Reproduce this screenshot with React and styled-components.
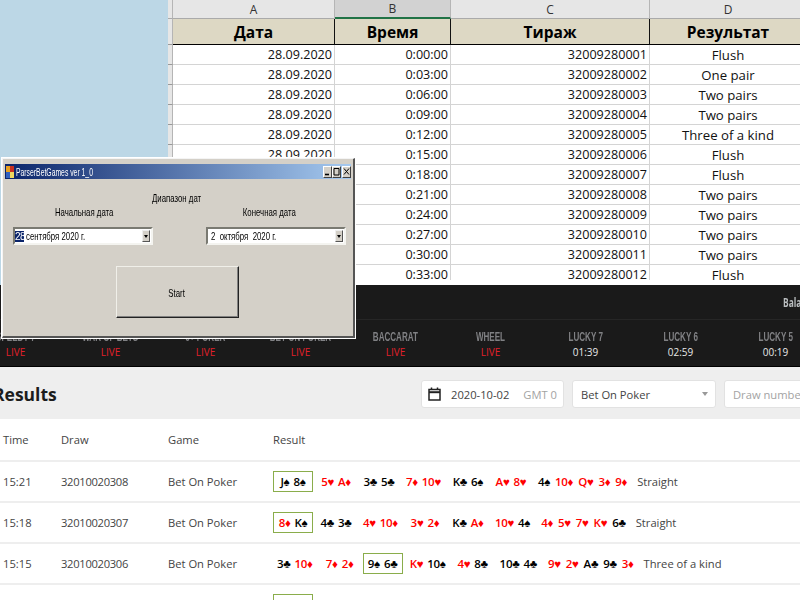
import React from "react";
import styled, { createGlobalStyle } from "styled-components";

const GlobalStyle = createGlobalStyle`
  html, body {
    margin: 0;
    padding: 0;
    width: 800px;
    height: 600px;
    overflow: hidden;
    background: #fff;
    font-family: "Open Sans", "Liberation Sans", sans-serif;
  }
`;

const Page = styled.div`
  position: relative;
  width: 800px;
  height: 600px;
  overflow: hidden;
`;

/* no condensed family is installed, so narrow text is squeezed */
const Squeezed = styled.span`
  display: inline-block;
  white-space: nowrap;
  transform: scaleX(${(p) => p.$x || 0.71});
  transform-origin: ${(p) => (p.$left ? "left center" : "center")};
`;

/* spreadsheet strip */
const Top = styled.div`
  display: flex;
  height: 285px;
  background: #fff;
`;

const Desktop = styled.div`
  flex: 0 0 168px;
  background: #bcd7e6;
`;

const Sheet = styled.div`
  flex: 1;
  height: 280px;
  overflow: hidden;
  display: grid;
  grid-template-columns: 5px 162px 116px 199px 157px;
  grid-auto-rows: 20px;
  grid-template-rows: 19px 26px;
  font-size: 12.6px;
  color: #111;
`;

const Corner = styled.div`
  background: #e6e6e6;
  border-right: 1px solid #b5b5b5;
  border-bottom: 1px solid #aaa;
  box-sizing: border-box;
`;

const ColLetter = styled.div`
  display: flex;
  align-items: center;
  justify-content: center;
  box-sizing: border-box;
  font-size: 12px;
  color: #333;
  background: ${(p) => (p.$active ? "#d2d2d2" : "#e6e6e6")};
  border-right: 1px solid #b5b5b5;
  border-bottom: ${(p) => (p.$active ? "2px solid #217346" : "1px solid #aaa")};
`;

const HeadCell = styled.div`
  display: flex;
  align-items: center;
  justify-content: center;
  box-sizing: border-box;
  padding-top: 1px;
  background: #ddd8c4;
  font-size: 15.5px;
  font-weight: 700;
  color: #000;
  border-right: 1px solid #111;
  border-bottom: 1px solid #000;
`;

const RowEdge = styled.div`
  background: #e6e6e6;
  box-sizing: border-box;
  border-right: 1px solid #b5b5b5;
  border-bottom: 1px solid #999;
`;

const Cell = styled.div`
  display: flex;
  align-items: center;
  justify-content: ${(p) => (p.$center ? "center" : "flex-end")};
  box-sizing: border-box;
  padding-right: ${(p) => (p.$center ? "0" : "2px")};
  font-size: ${(p) => (p.$center ? "13.2px" : "inherit")};
  border-right: 1px solid #d4d4d4;
  border-bottom: 1px solid #d4d4d4;
`;

/* dark game bar */
const GameBar = styled.div`
  height: 82px;
  background: #1a1a1a;
  border-bottom: 1px solid #000;
  box-sizing: border-box;
`;

const BarTop = styled.div`
  height: 35px;
  box-sizing: border-box;
  padding-left: 783px;
  display: flex;
  align-items: center;
  border-bottom: 1px solid #262626;
  overflow: hidden;
  font-size: 12px;
  font-weight: 700;
  color: #b9bdbf;
`;

const GameRow = styled.div`
  display: grid;
  grid-template-columns: repeat(9, 95px);
  margin-left: -32px;
  padding-top: 9px;
`;

const Game = styled.div`
  display: flex;
  flex-direction: column;
  align-items: center;
  gap: 1px;
`;

const GameName = styled.span`
  font-family: "Liberation Sans", sans-serif;
  font-size: 13px;
  line-height: 15px;
  font-weight: 700;
  color: #808184;
`;

const GameState = styled.span`
  font-size: 10px;
  line-height: 14px;
  color: ${(p) => (p.$live ? "#e0202a" : "#e8e8e8")};
`;

/* results */
const ResultsHead = styled.div`
  height: 52px;
  background: #eee;
  display: flex;
  align-items: center;
  padding-top: 2px;
  box-sizing: border-box;
`;

const Title = styled.h1`
  flex: 0 0 421px;
  margin: 0;
  text-indent: -7px;
  font-size: 17.5px;
  font-weight: 700;
  color: #1c1c1c;
`;

const Field = styled.div`
  flex: 0 0 ${(p) => p.$w}px;
  height: 28px;
  margin-right: 8px;
  box-sizing: border-box;
  background: #fff;
  border: 1px solid #e2e2e2;
  border-radius: 3px;
  display: flex;
  align-items: center;
  padding: 0 6px 0 ${(p) => p.$pad || 8}px;
  font-size: 11.2px;
  color: #444;
  white-space: nowrap;
`;

const DateText = styled.span`
  margin-left: 10px;
  flex: 1;
`;

const Muted = styled.span`
  color: #a3a3a3;
`;

const SelectText = styled.span`
  flex: 1;
`;

const Caret = styled.span`
  width: 0;
  height: 0;
  margin-right: 1px;
  border-left: 3.5px solid transparent;
  border-right: 3.5px solid transparent;
  border-top: 4px solid #999;
`;

const Row = styled.div`
  height: ${(p) => (p.$head ? "43px" : "41px")};
  box-sizing: border-box;
  display: grid;
  grid-template-columns: 58px 107px 105px 1fr;
  align-items: center;
  padding-left: 3px;
  background: #fff;
  border-bottom: 2px solid #eee;
  font-size: 11.2px;
  color: #444;
  white-space: nowrap;
`;

const DrawNo = styled.span`
  letter-spacing: -0.3px;
`;

const Cards = styled.div`
  display: flex;
  align-items: center;
`;

const Hand = styled.span`
  display: flex;
  justify-content: center;
  gap: ${(p) => (p.$board ? "5px" : "4px")};
  min-width: 40px;
  height: 21px;
  align-items: center;
  padding: 0 3px;
  margin-right: 3px;
  box-sizing: border-box;
  border: 1px solid ${(p) => (p.$win ? "#8aad4b" : "transparent")};
`;

const Card = styled.span`
  display: inline-flex;
  align-items: center;
  font-size: 11.5px;
  font-weight: 600;
  letter-spacing: -0.3px;
  color: ${(p) => (p.$red ? "#ff0000" : "#000")};
`;

const Combo = styled.span`
  margin-left: 3px;
`;

/* windows form floating over the collage */
const FormWindow = styled.div`
  position: absolute;
  left: 2px;
  top: 158px;
  width: 353px;
  height: 180px;
  box-sizing: border-box;
  padding: 5px 2px 2px 2px;
  background: #d4d0c8;
  border: 1px solid #f4f4f4;
  border-right: 2px solid #555;
  border-bottom: 2px solid #555;
  outline: 1px solid #fff;
  filter: blur(0.35px);
  font-family: "Liberation Sans", sans-serif;
  font-size: 11px;
  color: #000;
`;

const TitleBar = styled.div`
  height: 15px;
  display: flex;
  align-items: center;
  padding: 0 0 0 1px;
  background: linear-gradient(90deg, #0a246a, #a6caf0);
  color: #fff;
`;

const AppIcon = styled.svg`
  width: 8px;
  height: 12px;
  margin-right: 2px;
`;

const TitleText = styled.span`
  flex: 1;
  min-width: 0;
`;

const WinBtn = styled.span`
  width: 9px;
  height: 12px;
  margin-right: ${(p) => (p.$gap ? "1px" : "0")};
  box-sizing: border-box;
  background: #d4d0c8;
  border: 1px solid;
  border-color: #fff #404040 #404040 #fff;
  display: flex;
  align-items: center;
  justify-content: center;
`;

const FormBody = styled.div`
  display: flex;
  flex-direction: column;
  padding-top: 13px;
`;

const Caption = styled.div`
  text-align: center;
  line-height: 12px;
  margin-right: 2px;
`;

const PickerGrid = styled.div`
  display: grid;
  grid-template-columns: 140px 140px;
  column-gap: 53px;
  padding-left: 8px;
  margin-top: 2px;
`;

const PickerColumn = styled.div`
  display: flex;
  flex-direction: column;
`;

const PickerLabel = styled.div`
  text-align: center;
  line-height: 12px;
  margin-bottom: 9px;
  margin-right: ${(p) => p.$shift}px;
`;

const Picker = styled.div`
  height: 18px;
  box-sizing: border-box;
  display: flex;
  align-items: center;
  background: #fff;
  border: 2px solid;
  border-color: #7a7a72 #f4f4f0 #f4f4f0 #7a7a72;
  padding-right: 1px;
`;

const PickerText = styled.span`
  flex: 1;
  min-width: 0;
  display: flex;
  align-items: center;
  padding-left: ${(p) => p.$pad || 0}px;
`;

const Selected = styled.span`
  background: #0a246a;
  color: #fff;
  font-size: 10px;
  width: 9px;
  margin-right: 2px;
  overflow: hidden;
  letter-spacing: -0.6px;
`;

const PickerArrow = styled.span`
  flex: 0 0 8px;
  height: 12px;
  box-sizing: border-box;
  background: #d4d0c8;
  border: 1px solid;
  border-color: #eee #555 #555 #eee;
  display: flex;
  align-items: center;
  justify-content: center;

  &::after {
    content: "";
    border-left: 2px solid transparent;
    border-right: 2px solid transparent;
    border-top: 3px solid #000;
  }
`;

const StartButton = styled.div`
  align-self: center;
  width: 123px;
  height: 52px;
  margin-top: 21px;
  margin-left: -2px;
  padding-top: 2px;
  box-sizing: border-box;
  display: flex;
  align-items: center;
  justify-content: center;
  background: #d4d0c8;
  border: 1px solid;
  border-color: #f0efe9 #222 #222 #f0efe9;
  box-shadow: inset -1px -1px 0 #808080;
`;

const dates = ["0:00:00", "0:03:00", "0:06:00", "0:09:00", "0:12:00", "0:15:00", "0:18:00", "0:21:00", "0:24:00", "0:27:00", "0:30:00", "0:33:00"];
const outcomes = ["Flush", "One pair", "Two pairs", "Two pairs", "Three of a kind", "Flush", "Flush", "Two pairs", "Two pairs", "Two pairs", "Two pairs", "Flush"];

const games = [
  ["SPEEDY 7", "LIVE"],
  ["WAR OF BETS", "LIVE"],
  ["6+ POKER", "LIVE"],
  ["BET ON POKER", "LIVE"],
  ["BACCARAT", "LIVE"],
  ["WHEEL", "LIVE"],
  ["LUCKY 7", "01:39"],
  ["LUCKY 6", "02:59"],
  ["LUCKY 5", "00:19"],
];

const results = [
  {
    time: "15:21",
    draw: "32010020308",
    win: 0,
    hands: ["J♠ 8♠", "5♥ A♦", "3♣ 5♣", "7♦ 10♥", "K♣ 6♠", "A♥ 8♥", "4♠ 10♦ Q♥ 3♦ 9♦"],
    combo: "Straight",
  },
  {
    time: "15:18",
    draw: "32010020307",
    win: 0,
    hands: ["8♦ K♠", "4♣ 3♣", "4♥ 10♦", "3♥ 2♦", "K♣ A♦", "10♥ 4♠", "4♦ 5♥ 7♥ K♥ 6♣"],
    combo: "Straight",
  },
  {
    time: "15:15",
    draw: "32010020306",
    win: 2,
    hands: ["3♣ 10♦", "7♦ 2♦", "9♠ 6♣", "K♥ 10♠", "4♥ 8♣", "10♣ 4♣", "9♥ 2♥ A♣ 9♣ 3♦"],
    combo: "Three of a kind",
  },
];

const isRed = (c) => c.includes("♥") || c.includes("♦");

const App = () => {
  return (
    <Page>
      <GlobalStyle />
      <Top>
        <Desktop />
        <Sheet>
          <Corner />
          <ColLetter>A</ColLetter>
          <ColLetter $active>B</ColLetter>
          <ColLetter>C</ColLetter>
          <ColLetter>D</ColLetter>
          <RowEdge />
          <HeadCell>Дата</HeadCell>
          <HeadCell>Время</HeadCell>
          <HeadCell>Тираж</HeadCell>
          <HeadCell>Результат</HeadCell>
          {dates.map((t, i) => (
            <React.Fragment key={t}>
              <RowEdge />
              <Cell>28.09.2020</Cell>
              <Cell>{t}</Cell>
              <Cell>{32009280001 + i}</Cell>
              <Cell $center>{outcomes[i]}</Cell>
            </React.Fragment>
          ))}
        </Sheet>
      </Top>

      <GameBar>
        <BarTop>
          <Squeezed $x={0.7} $left>Balance</Squeezed>
        </BarTop>
        <GameRow>
          {games.map(([name, state]) => (
            <Game key={name}>
              <GameName>
                <Squeezed $x={0.62}>{name}</Squeezed>
              </GameName>
              <GameState $live={state === "LIVE"}>{state}</GameState>
            </Game>
          ))}
        </GameRow>
      </GameBar>

      <ResultsHead>
        <Title>Results</Title>
        <Field $w={143} $pad={6}>
          <svg width="13" height="14" viewBox="0 0 13 14" fill="none" stroke="#222" strokeWidth="1.5">
            <rect x="1" y="2.5" width="11" height="10.5" />
            <path d="M1 5.2h11" strokeWidth="2" />
            <path d="M3.5 0.5v2.5M9.5 0.5v2.5" />
          </svg>
          <DateText>2020-10-02</DateText>
          <Muted>GMT 0</Muted>
        </Field>
        <Field $w={144}>
          <SelectText>Bet On Poker</SelectText>
          <Caret />
        </Field>
        <Field $w={120}>
          <Muted>Draw number</Muted>
        </Field>
      </ResultsHead>

      <Row $head>
        <span>Time</span>
        <span>Draw</span>
        <span>Game</span>
        <span>Result</span>
      </Row>
      {results.map((r) => (
        <Row key={r.draw}>
          <span>{r.time}</span>
          <DrawNo>{r.draw}</DrawNo>
          <span>Bet On Poker</span>
          <Cards>
            {r.hands.map((h, i) => (
              <Hand key={h} $win={i === r.win} $board={i === r.hands.length - 1}>
                {h.split(" ").map((c) => (
                  <Card key={c} $red={isRed(c)}>
                    {c}
                  </Card>
                ))}
              </Hand>
            ))}
            <Combo>{r.combo}</Combo>
          </Cards>
        </Row>
      ))}
      {/* next row only shows the top of its winning hand box */}
      <Row>
        <span />
        <span />
        <span />
        <Cards>
          <Hand $win />
        </Cards>
      </Row>

      <FormWindow>
        <TitleBar>
          <AppIcon viewBox="0 0 8 12">
            <rect x="0" y="0" width="4" height="6" fill="#e8a020" />
            <rect x="4" y="0" width="4" height="6" fill="#c83020" />
            <rect x="0" y="6" width="4" height="6" fill="#3060c0" />
            <rect x="4" y="6" width="4" height="6" fill="#f0d860" />
          </AppIcon>
          <TitleText>
            <Squeezed $x={0.62} $left>ParserBetGames ver 1_0</Squeezed>
          </TitleText>
          <WinBtn>
            <svg width="7" height="9" viewBox="0 0 7 9"><path d="M1 7.5h4" stroke="#000" strokeWidth="1.6" /></svg>
          </WinBtn>
          <WinBtn $gap>
            <svg width="7" height="9" viewBox="0 0 7 9" fill="none"><path d="M1 1.5h5v6.5h-5z" stroke="#000" /></svg>
          </WinBtn>
          <WinBtn>
            <svg width="7" height="9" viewBox="0 0 7 9"><path d="M1 1.5l5 6M6 1.5l-5 6" stroke="#000" /></svg>
          </WinBtn>
        </TitleBar>
        <FormBody>
          <Caption>
            <Squeezed>Диапазон дат</Squeezed>
          </Caption>
          <PickerGrid>
            <PickerColumn>
              <PickerLabel $shift={-2}>
                <Squeezed>Начальная дата</Squeezed>
              </PickerLabel>
              <Picker>
                <PickerText>
                  <Selected>28</Selected>
                  <Squeezed $left>сентября 2020 г.</Squeezed>
                </PickerText>
                <PickerArrow />
              </Picker>
            </PickerColumn>
            <PickerColumn>
              <PickerLabel $shift={13}>
                <Squeezed>Конечная дата</Squeezed>
              </PickerLabel>
              <Picker>
                <PickerText $pad={3}>
                  <Squeezed $left>2&nbsp; октября&nbsp; 2020 г.</Squeezed>
                </PickerText>
                <PickerArrow />
              </Picker>
            </PickerColumn>
          </PickerGrid>
          <StartButton>
            <Squeezed>Start</Squeezed>
          </StartButton>
        </FormBody>
      </FormWindow>
    </Page>
  );
};

export default App;
